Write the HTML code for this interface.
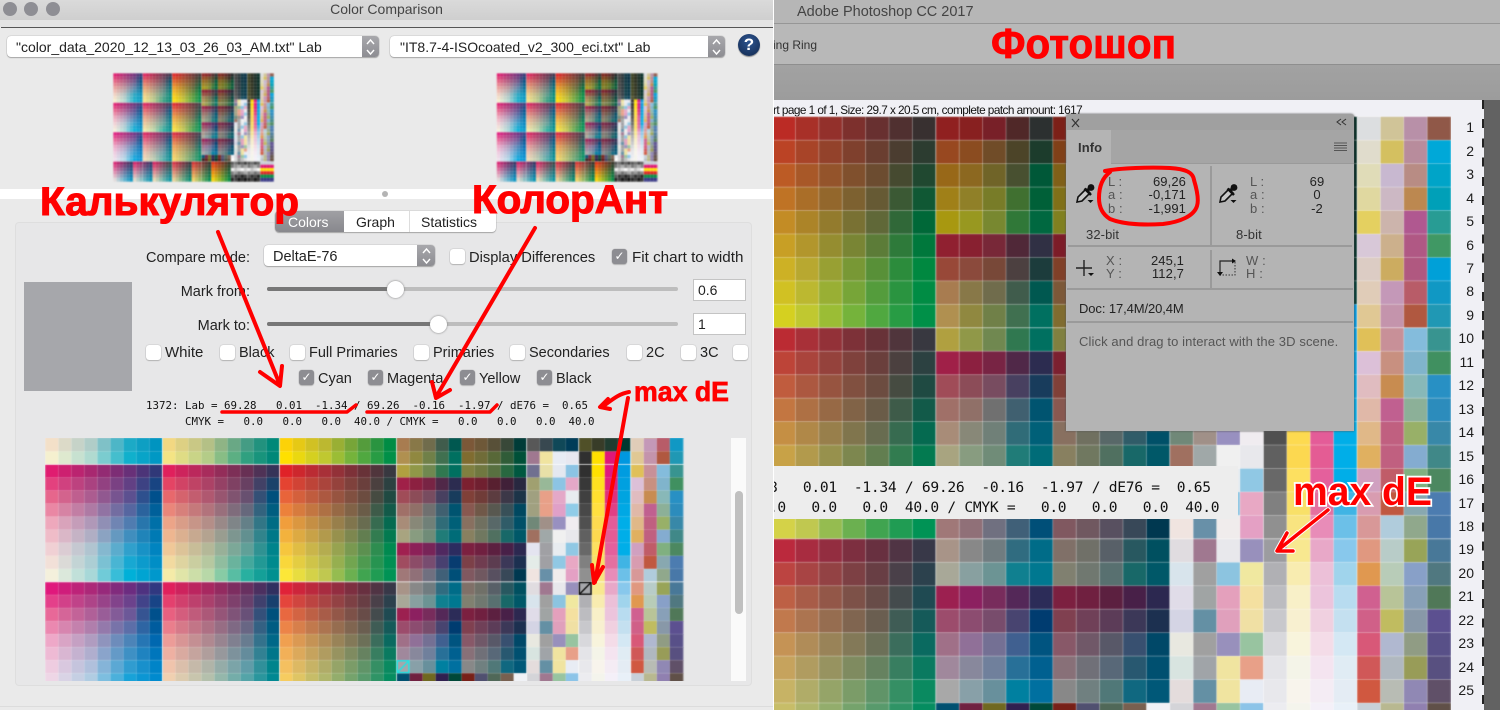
<!DOCTYPE html>
<html><head><meta charset="utf-8"><title>Color Comparison</title>
<style>
html,body{margin:0;padding:0;background:#f0f0f5}
#p{position:relative;width:1500px;height:710px;overflow:hidden;font-family:"Liberation Sans",sans-serif;color:#222}
.a,.t,canvas{position:absolute}
.t{white-space:nowrap;line-height:16px;font-size:14.5px}
.cb{position:absolute;width:15px;height:15px;background:#fff;border-radius:3px;box-shadow:0 0 1px #888,0 1px 1px #bbb}
.on{background:#8d8d92;color:#fff;font-size:12px;line-height:15px;text-align:center}
.pop{position:absolute;background:#fff;border-radius:4px;box-shadow:0 0 1px #888,0 1px 1px #aaa}
.st{position:absolute;right:0;top:0;bottom:0;background:linear-gradient(#a8a8ac,#8d8d92);border-radius:0 4px 4px 0}
.inp{position:absolute;background:#fff;border:1px solid #c4c4c4;box-sizing:border-box;font-size:14px;line-height:21px;padding-left:4px}
.trk{position:absolute;height:4px;border-radius:2px}
.kn{position:absolute;width:17px;height:17px;border-radius:50%;background:#fff;box-shadow:0 0 2px #777}
.m{font-family:"DejaVu Sans Mono","Liberation Mono",monospace;white-space:pre;position:absolute;color:#111}
.i{position:absolute;white-space:nowrap;font-size:13px;line-height:14px;letter-spacing:.1px;color:#222}
.g{color:#555}
.r{text-align:right}
.ln{position:absolute;background:#9a9a9a}
</style></head><body><div id="p">

<!-- Photoshop side -->
<div class="a" style="left:773px;top:0;width:727px;height:24px;background:#b6b6b6"></div>
<div class="a" style="left:773px;top:23px;width:727px;height:1px;background:#969696"></div>
<div class="a" style="left:773px;top:24px;width:727px;height:40px;background:#b8b8b8"></div>
<div class="a" style="left:773px;top:64px;width:727px;height:1px;background:#8e8e8e"></div>
<div class="a" style="left:773px;top:65px;width:727px;height:35px;background:linear-gradient(#a2a2a2,#9c9c9c)"></div>
<div class="t" style="left:797px;top:4px;color:#444;font-size:14.5px">Adobe Photoshop CC 2017</div>
<div class="t" style="left:773px;top:37px;font-size:12px;color:#333">ing Ring</div>
<div class="a" style="left:773px;top:100px;width:727px;height:610px;background:#f0f0f5"></div>
<div class="t" style="left:773px;top:102px;font-size:11.8px;letter-spacing:-.55px;color:#111">rt page 1 of 1, Size: 29.7 x 20.5 cm, complete patch amount: 1617</div>
<canvas id="cR" width="678" height="594" style="left:773px;top:116px;filter:blur(.3px)"></canvas>
<div class="a" style="left:1482px;top:100px;width:2px;height:610px;background:repeating-linear-gradient(#222 0 9px,transparent 9px 19.2px)"></div>
<div class="a" style="left:1484px;top:100px;width:16px;height:610px;background:#626262"></div>
<div class="a r" style="left:1440px;top:116.3px;width:34px;font-size:14px;line-height:23.46px;color:#1c1c1c;white-space:pre">1
2
3
4
5
6
7
8
9
10
11
12
13
14
15
16
17
18
19
20
21
22
23
24
25</div>

<!-- overlay numbers -->
<div class="a" style="left:773px;top:466px;width:465px;height:53px;background:#ededed;overflow:hidden"><div class="m" style="left:-140px;top:12px;font-size:14.6px;line-height:20px;letter-spacing:-.29px">1372: Lab = 69.28   0.01  -1.34 / 69.26  -0.16  -1.97 / dE76 =  0.65
      CMYK =   0.0   0.0   0.0  40.0 / CMYK =   0.0   0.0   0.0  40.0</div></div>

<!-- Info panel -->
<div class="a" style="left:1066px;top:114px;width:288px;height:317px;background:#b4b4b4;border-radius:3px 3px 0 0;box-shadow:0 0 2px #555"></div>
<div class="a" style="left:1066px;top:114px;width:288px;height:16px;background:#a0a0a0;border-radius:3px 3px 0 0"></div>
<div class="a" style="left:1066px;top:130px;width:288px;height:33px;background:#a5a5a5"></div>
<div class="a" style="left:1067px;top:130px;width:44px;height:34px;background:#b4b4b4"></div>
<div class="ln" style="left:1111px;top:163px;width:243px;height:1px"></div>
<div class="ln" style="left:1210px;top:166px;width:2px;height:80px"></div>
<div class="ln" style="left:1068px;top:245px;width:284px;height:2px"></div>
<div class="ln" style="left:1210px;top:250px;width:2px;height:38px"></div>
<div class="ln" style="left:1067px;top:288px;width:286px;height:2px"></div>
<div class="ln" style="left:1067px;top:321px;width:286px;height:2px"></div>
<div class="i" style="left:1078px;top:141px;font-weight:bold;color:#333">Info</div>
<div class="i g" style="left:1108px;top:175px;line-height:13.4px">L :<br>a :<br>b :</div>
<div class="i r" style="left:1130px;top:175px;width:56px;line-height:13.4px">69,26<br>-0,171<br>-1,991</div>
<div class="i g" style="left:1250px;top:175px;line-height:13.4px">L :<br>a :<br>b :</div>
<div class="i" style="left:1297px;top:175px;width:40px;line-height:13.4px;text-align:center">69<br>0<br>-2</div>
<div class="i" style="left:1086px;top:228px;color:#333">32-bit</div>
<div class="i" style="left:1236px;top:228px;color:#333">8-bit</div>
<div class="i g" style="left:1106px;top:254px;line-height:13.4px">X :<br>Y :</div>
<div class="i r" style="left:1130px;top:254px;width:54px;line-height:13.4px">245,1<br>112,7</div>
<div class="i g" style="left:1246px;top:254px;line-height:13.4px">W :<br>H :</div>
<div class="i" style="left:1079px;top:302px;letter-spacing:-.1px">Doc: 17,4M/20,4M</div>
<div class="i" style="left:1079px;top:335px;color:#555;letter-spacing:.11px">Click and drag to interact with the 3D scene.</div>

<!-- Left window -->
<div class="a" style="left:0;top:0;width:773px;height:710px;background:#eaeaea;border-right:1px solid #fff"></div>
<div class="a" style="left:0;top:0;width:773px;height:20px;background:linear-gradient(#dadada,#cfcfcf)"></div>
<div class="a" style="left:0;top:20px;width:773px;height:7px;background:#e4e4e4"></div>
<div class="a" style="left:1px;top:27px;width:772px;height:1px;background:#555"></div>
<div class="a" style="left:3px;top:2px;width:14px;height:14px;border-radius:50%;background:#8e8e94"></div>
<div class="a" style="left:24px;top:2px;width:14px;height:14px;border-radius:50%;background:#8e8e94"></div>
<div class="a" style="left:46px;top:2px;width:14px;height:14px;border-radius:50%;background:#8e8e94"></div>
<div class="t" style="left:0;top:1px;width:773px;text-align:center;font-size:14px;color:#444">Color Comparison</div>

<div class="pop" style="left:7px;top:36px;width:372px;height:21px"><div class="st" style="width:17px"></div></div>
<div class="t" style="left:16px;top:39px;font-size:14px">"color_data_2020_12_13_03_26_03_AM.txt" Lab</div>
<div class="pop" style="left:390px;top:36px;width:335px;height:21px"><div class="st" style="width:17px"></div></div>
<div class="t" style="left:400px;top:39px;font-size:14px">"IT8.7-4-ISOcoated_v2_300_eci.txt" Lab</div>
<div class="a" style="left:738px;top:34px;width:22px;height:22px;border-radius:50%;background:radial-gradient(circle at 50% 35%,#2d5590,#12284e);box-shadow:0 1px 1px #888;color:#fff;font-weight:bold;font-size:17px;line-height:22px;text-align:center">?</div>

<canvas id="c1" width="162" height="109" style="left:113px;top:73px;filter:blur(.5px)"></canvas>
<canvas id="c2" width="162" height="109" style="left:496px;top:73px;filter:blur(.5px)"></canvas>

<div class="a" style="left:0;top:189px;width:773px;height:10px;background:#fff"></div>
<div class="a" style="left:382px;top:190.5px;width:6px;height:6px;border-radius:50%;background:#b4b4b4"></div>

<div class="a" style="left:15px;top:222px;width:737px;height:464px;background:#e7e7e8;border:1px solid #dedede;border-radius:4px;box-sizing:border-box"></div>
<div class="a" style="left:275px;top:211px;width:221px;height:21px;background:#fff;border-radius:4px;box-shadow:0 0 1px #888,0 1px 1px #aaa"></div>
<div class="a" style="left:275px;top:211px;width:69px;height:21px;background:linear-gradient(#a0a0a4,#88888d);border-radius:4px 0 0 4px"></div>
<div class="a" style="left:409px;top:211px;width:1px;height:21px;background:#ddd"></div>
<div class="t" style="left:288px;top:214px;color:#fff;font-size:14px">Colors</div>
<div class="t" style="left:356px;top:214px;font-size:14px">Graph</div>
<div class="t" style="left:421px;top:214px;font-size:14px">Statistics</div>

<div class="t r" style="left:100px;top:250px;width:150px">Compare mode:</div>
<div class="pop" style="left:264px;top:245px;width:171px;height:21px"><div class="st" style="width:18px"></div></div>
<div class="t" style="left:273px;top:249px">DeltaE-76</div>
<div class="cb" style="left:450px;top:249px"></div><div class="t" style="left:469px;top:250px;font-size:14.7px">Display Differences</div>
<div class="cb on" style="left:612px;top:249px">✓</div><div class="t" style="left:632px;top:250px;font-size:15.2px">Fit chart to width</div>

<div class="a" style="left:24px;top:282px;width:108px;height:109px;background:#a6a7ab"></div>

<div class="t r" style="left:100px;top:284px;width:150px">Mark from:</div>
<div class="trk" style="left:267px;top:287px;width:411px;background:#bdbdbd"></div>
<div class="trk" style="left:267px;top:287px;width:128px;background:#777"></div>
<div class="kn" style="left:387px;top:281px"></div>
<div class="inp" style="left:693px;top:279px;width:53px;height:22px">0.6</div>

<div class="t r" style="left:100px;top:318px;width:150px">Mark to:</div>
<div class="trk" style="left:267px;top:322px;width:411px;background:#bdbdbd"></div>
<div class="trk" style="left:267px;top:322px;width:171px;background:#777"></div>
<div class="kn" style="left:430px;top:316px"></div>
<div class="inp" style="left:693px;top:313px;width:53px;height:22px">1</div>

<div class="cb" style="left:146px;top:345px"></div><div class="t" style="left:165px;top:345px;font-size:15px">White</div>
<div class="cb" style="left:220px;top:345px"></div><div class="t" style="left:239px;top:345px">Black</div>
<div class="cb" style="left:290px;top:345px"></div><div class="t" style="left:309px;top:345px">Full Primaries</div>
<div class="cb" style="left:414px;top:345px"></div><div class="t" style="left:433px;top:345px">Primaries</div>
<div class="cb" style="left:510px;top:345px"></div><div class="t" style="left:529px;top:345px">Secondaries</div>
<div class="cb" style="left:627px;top:345px"></div><div class="t" style="left:646px;top:345px">2C</div>
<div class="cb" style="left:681px;top:345px"></div><div class="t" style="left:700px;top:345px">3C</div>
<div class="cb" style="left:733px;top:345px"></div>

<div class="cb on" style="left:299px;top:370px">✓</div><div class="t" style="left:318px;top:371px">Cyan</div>
<div class="cb on" style="left:368px;top:370px">✓</div><div class="t" style="left:387px;top:371px">Magenta</div>
<div class="cb on" style="left:460px;top:370px">✓</div><div class="t" style="left:479px;top:371px">Yellow</div>
<div class="cb on" style="left:537px;top:370px">✓</div><div class="t" style="left:556px;top:371px">Black</div>

<div class="m" style="left:146px;top:398px;font-size:10.8px;line-height:16px">1372: Lab = 69.28   0.01  -1.34 / 69.26  -0.16  -1.97 / dE76 =  0.65
      CMYK =   0.0   0.0   0.0  40.0 / CMYK =   0.0   0.0   0.0  40.0</div>

<canvas id="cL" width="640" height="243" style="left:45px;top:438px;filter:blur(.3px)"></canvas>
<div class="a" style="left:731px;top:438px;width:15px;height:243px;background:#fafafa"></div>
<div class="a" style="left:735px;top:491px;width:8px;height:123px;border-radius:4px;background:#c0c0c0"></div>
<div class="a" style="left:0;top:706px;width:773px;height:1px;background:#dcdcdc"></div>

<!-- vector overlay -->
<svg class="a" style="left:0;top:0" width="1500" height="710" viewBox="0 0 1500 710">
 <!-- stepper chevrons -->
 <g fill="none" stroke="#fff" stroke-width="1.4">
  <path d="M367,44l3.5,-4l3.5,4M367,50l3.5,4l3.5,-4"/>
  <path d="M713,44l3.5,-4l3.5,4M713,50l3.5,4l3.5,-4"/>
  <path d="M423,253l3.5,-4l3.5,4M423,259l3.5,4l3.5,-4"/>
 </g>
 <!-- Info panel icons -->
 <g stroke="#333" fill="none" stroke-width="1.2">
  <path d="M1072,119l7,8M1079,119l-7,8"/>
  <path d="M1341,119l-4,3l4,3M1346,119l-4,3l4,3" stroke-width="1"/>
  <path d="M1334,143h13M1334,145.5h13M1334,148h13M1334,150.5h13" stroke="#555" stroke-width="1"/>
 </g>
 <g>
  <path d="M1077,202l1,-5l8,-8l4,4l-8,8z" fill="#c8c8c8" stroke="#111" stroke-width="1.600"/>
  <path d="M1084.500,188.500l6.500,6.500" stroke="#111" stroke-width="2.600"/>
  <circle cx="1091" cy="187.500" r="3.400" fill="#111"/>
  <path d="M1087,191l4,-4" stroke="#111" stroke-width="3.200"/>
  <path d="M1087.500,200h6l-3,3z" fill="#111"/>
 </g>
 <g transform="translate(143,0)">
  <path d="M1077,202l1,-5l8,-8l4,4l-8,8z" fill="#c8c8c8" stroke="#111" stroke-width="1.600"/>
  <path d="M1084.500,188.500l6.500,6.500" stroke="#111" stroke-width="2.600"/>
  <circle cx="1091" cy="187.500" r="3.400" fill="#111"/>
  <path d="M1087,191l4,-4" stroke="#111" stroke-width="3.200"/>
  <path d="M1087.500,200h6l-3,3z" fill="#111"/>
 </g>
 <path d="M1084,260v16M1076,268h16" stroke="#222" stroke-width="1.400" fill="none"/>
 <path d="M1088,273h6l-3,3z" fill="#111"/>
 <path d="M1220,275v-14h15" stroke="#222" stroke-width="1.200" fill="none"/>
 <path d="M1235,262v13h-15" stroke="#333" stroke-width="1" stroke-dasharray="1.500 1.500" fill="none"/>
 <path d="M1232,258.500l4,2.500l-4,2.500zM1217,272l3,4l3,-4z" fill="#111"/>

 <!-- red annotations -->
 <g font-family="'Liberation Sans',sans-serif" font-weight="bold" fill="#f00">
  <text x="40" y="215" font-size="40" textLength="259" lengthAdjust="spacingAndGlyphs" stroke="#f00" stroke-width="1.100">Калькулятор</text>
  <text x="472" y="213" font-size="40" textLength="196" lengthAdjust="spacingAndGlyphs" stroke="#f00" stroke-width="1.100">КолорАнт</text>
  <text x="991" y="58" font-size="42" textLength="185" lengthAdjust="spacingAndGlyphs" stroke="#f00" stroke-width=".8">Фотошоп</text>
  <text x="634" y="401" font-size="28" textLength="95" lengthAdjust="spacingAndGlyphs" stroke="#f00" stroke-width=".7">max dE</text>
  <text x="1293" y="505" font-size="40" textLength="139" lengthAdjust="spacingAndGlyphs" stroke="#fff" stroke-width="3.500" paint-order="stroke">max dE</text>
 </g>
 <g fill="none" stroke="#f00" stroke-width="4" stroke-linecap="round" stroke-linejoin="round">
  <path d="M218,232L280,385M260,372L280,386L282,366"/>
  <path d="M535,228L436,397M432,382L436,398L450,390"/>
  <path d="M222,412H347L356,405M367,412H490L497,405" stroke-width="3.500"/>
  <path d="M629,392C618,394 612,400 602,407M608,399L600,407L610,409"/>
  <path d="M628,398L595,582M592,565L594,583L603,567" stroke-width="4"/>
 </g>
 <path d="M1328,510L1278,550M1287,533L1277,551L1293,551" fill="none" stroke="#fff" stroke-width="5.500" stroke-linecap="round" stroke-linejoin="round"/>
 <path d="M1328,510L1278,550M1287,533L1277,551L1293,551" fill="none" stroke="#f00" stroke-width="3.500" stroke-linecap="round" stroke-linejoin="round"/>
 <path d="M1105,171C1120,168 1150,167 1170,168C1185,169 1193,172 1194,180C1197,190 1199,200 1197,206C1194,216 1180,222 1163,224C1145,225 1125,225 1110,219C1102,214 1099,206 1099,198C1099,188 1102,178 1110,172" fill="none" stroke="#f00" stroke-width="4" stroke-linecap="round"/>
</svg>
</div>

<script>
var S=function(t){return t.trim().split(/\s+/).map(function(l){return l.split(',')})};
var CT=[[
 S("E0186C,A82870,6C2C78,303470 E46280,B05C80,6C5488,004C80 EAA09C,B8949C,5C84A8,006C98 F0D0C0,B0C0C0,28A4C0,0090BC F5F0CF,B0DAD0,10B0CC,0098C4"),
 S("E0205C,A8284C,68304C,383048 E46860,B05860,685060,004C68 EAA070,B08878,647878,006C78 F0CC80,B4B484,589888,008878 F4E484,B4CC88,30A080,008878"),
 S("E02020,A83028,683030,383030 E46020,A85828,6C4C30,204830 F09C20,AC8428,606838,006838 F8C410,B8A830,589038,008840 FFE000,C0C830,50A840,009048")
],[
 S("E01C70,A82870,683078,303878 E6668C,AC5C90,5C5090,00508C EEA8BC,B098B8,507CB0,0070A8 F0D0D4,B0C4D0,30A0CC,0084C0 F4F0DC,A8D8D8,00B0D8,0098CC"),
 S("E0205C,A82C5C,683054,363358 E8686C,B05870,685070,00507C ECA488,B48E88,648088,006C84 F0C898,B4B898,60A098,00848C F4EBA8,B8D8A8,28B0A0,009090"),
 S("E02228,A83038,683238,383840 E8643A,AC5840,6C4C40,1F4A42 F09E3C,B08848,686C50,056A50 F6C63E,B4AC50,5C9050,008A50 FCE738,C0C850,40A450,009355")
],[
 S("E0187C,AC2878,6C2C80,303880 E86898,B06098,6C5898,00508C EEA8C8,B09CC0,4C84B8,0068B0 EECCE0,B0C0DC,309CD0,0084C8 EEE0EC,B0D8E8,00A8E0,0090D4"),
 S("E0205C,A82860,683060,303060 E86080,AC5878,685078,00507C EC9C98,B08890,687C90,006888 F0C4AC,B0B4A8,609CA8,00848C F0DCB4,B8CCB0,48ACA8,008C98"),
 S("E02238,A82C40,683040,383848 E86840,A85C48,684C48,1F4A52 F0A050,B08C58,6C7058,0A6A60 F4C060,B0AC68,609468,0A8A60 F8D860,B0C070,50A070,009060")
]];
var T1=S(`
902020,882020,782028,502828,2C3030,7C2018,702018,5C2020,3C2020,1C2020
984820,8B4C20,704C28,4C4428,1C3C2C,804018,704018,583C20,382C20,103028
986818,8C6820,706428,485030,005838,806018,706018,585820,344828,004828
A08018,908028,787C28,407030,006038,807018,707018,587020,306028,005030
A89810,989820,788830,307838,006840,808020,707820,587028,286830,005830
902030,882030,782838,502838,303044,7C1C28,701C28,5C1C30,401C30,1C2030
984838,8B4A3C,784838,4C4040,1C3C3C,804028,704028,583C30,383438,103030
A87C50,887848,706C4C,405C4C,005850,7C5838,6E5838,585038,384838,003C38
B09050,908840,708048,407050,007060,806C30,706C38,586838,305C38,005038
B0A040,909848,708850,307850,007060,808040,707840,587040,286840,005840
A02048,8C2040,782444,502848,2C2C50,7C2030,702030,582030,402038,282840
A04C58,8C4C58,784C60,484060,183C5C,804038,703C38,5C3C40,3C3848,1C3448
A07068,907068,707070,406070,005470,885850,705848,585850,385058,004860
A88C78,888878,708078,306C78,006078,887060,707060,586868,305C68,005068
A8A480,889C80,708C78,207C78,006C78,888060,707860,507060,186868,005868
A02050,8C2058,782458,502860,2C2C60,7C2040,702040,5C2040,482048,2C2850
A04C60,8C4C68,784C70,484070,083C70,7C4048,703C50,5C3C50,3C3858,1C3050
A07878,907078,707080,406078,004F78,805860,705860,585060,384858,003850
A89488,888888,707C80,306C80,006C88,807068,707068,586068,285860,005060
A8A898,88A0A0,6C9494,108090,007890,808070,707870,587070,186868,005868
9C2050,8C2060,782C5C,542858,2C2C58,7C2040,702040,5C2040,482048,2C2850
9C4C6C,8C4C70,784C6C,484470,003C70,804050,704058,5C3C58,3C3858,1C3050
A07088,907098,747094,406090,005480,885868,705868,585868,385070,004868
A0889C,88889C,70809C,287098,006090,887078,707078,586878,285870,005070
A8A8A8,88A0A8,68909C,0080A0,0070A0,888888,708080,507878,106880,005878
005070,702040,706820,302050,004838,782018,505070,506858,786050,F0F2F6
302020,601818,606010,201840,003020,601010,404060,405040,604838,FFFFFF`);
var T2=S(`
3C3C3C,283438,0C3440,002C40,383C1C,282C1C,182C24,002820
3C3C3C,283438,0C3440,002C40,383C1C,282C1C,182C24,002820
404040,283438,0C3440,002C40,383C1C,282C1C,182C24,002820
404040,2C383C,0C3840,003040,3C401C,2C301C,182C24,002820
444444,2C383C,0C3840,003040,3C401C,2C301C,182C24,002820
484848,303C44,0C3C48,003448,404420,303420,1C3028,002C24
4C4C4C,303C44,0C3C48,003448,404420,303420,1C3028,002C24
585858,384850,104858,003C58,505028,383C28,203C30,003830
A07890,F0E4A0,E8ECF4,E8E8F0,303030,FFE000,E01878,0098E0
707090,E8E0A8,E4E8F0,8CC4E4,303030,FFE000,E01880,009CE0
A0A070,98B898,8CC4E4,E4A8C8,383838,FFE020,E0207C,00A0E0
A0A080,E8A088,E4A8C8,E8ECF0,404040,FFE030,E0307C,00A4E0
A0A080,E8A088,E0A0C8,90CCE8,484848,FFE040,E04084,00A8E4
708878,A09088,9890C0,F0ECF0,505050,FDDA50,E45C98,00AEE8
A07060,A0A8A8,F0F0F0,E8E8EC,606060,FCD850,E45C94,00AEE8
E4E4F0,A0A0A4,E8ECF0,90C8E4,686868,FDE060,E4609C,00AEE8
E4ECE8,A0A0A4,90C8E4,E8A8C4,808080,F8E068,E470A0,40B4E4
F0E4E0,6890A8,F0ECEC,E4A0C4,909090,F8E480,E88CB8,6CC0E8
E0DCE0,A07890,E8E8EC,9890BC,9C9CA0,F8E890,E8A8C8,88C8EC
D8E4EC,A0A0A0,8CC4E0,F0E8A0,B0B0B4,F8ECB0,ECC0D8,A0D4EC
E0DCE8,A0A4A4,E4A0BC,F4E0A0,BCBCC0,F8F0C8,ECC4DC,B8DCF0
D4D4E4,6490A4,E0A0BC,F0E0A4,C8C8CC,F8F0D0,F0D0E0,C4E0F0
E8E8E0,A0A0A0,9890BC,98C4A0,D8D8DC,F8F4DC,F4DCE8,D4E8F4
D8E4E0,A0A4A8,F0E4A0,E8A088,E4E4E8,F4F4E8,F4E4F0,E0ECF4
E4DCDC,6490A4,F0E4A0,E8ECF4,E8E8EC,F8F4EC,F4ECF4,E4ECF4
D4D4D8,A07890,98C4A0,8CC4E8,ECECF0,F4F4EC,F4F0F8,E8F0F8
D8D8D8,909090,C0C0C0,E0E0E0,F0F0F0,F4F4EC,F4F0F8,ECF4F8`);
var T3=S(`
DCDEE0,D0C498,B890A8,905848
E0DCCC,D4C060,B88C9C,00A8D8
E0DCB8,C8B8D0,B88C84,00A4C8
E0D8A0,CCB8C4,BC8850,00A0B8
E4D060,CCB4AC,B05890,289C94
D8C8D8,CCB08C,B05884,409864
DCCCC4,CCAC60,B05880,00A0D8
E0CCB8,C498B8,B85C68,1098C4
E0C894,C494AC,B05840,2098B4
E0C058,C89098,84BCDC,389490
DCC0D8,C89080,80B4CC,409060
E0BCC0,C88C50,88B8B8,2890C4
E0B8A8,C06090,8CB098,2C8CBC
E0B888,C06080,98B068,3888A8
E0B060,C06080,84ACD0,408888
D0A0C0,C05C68,80B080,4C8860
D89CB0,C05840,88A8B0,4C7CB0
D89898,B0CCDC,90A88C,4878A8
E09880,B8CCC8,98A458,487898
E09850,B8CCB8,88A0C8,507880
D06090,B8C498,88A0B8,507858
D06088,C0BC60,8898A8,5C5090
D85878,B0B8D0,909C84,585088
D05858,B0B8C0,989C58,585080
D05840,B8BCB4,9088B4,605068
C8D0D8,B8B890,9080B0,605048
B8C0C8,B8B880,8C80A8,604838`);
function h(s){return [parseInt(s.substr(0,2),16),parseInt(s.substr(2,2),16),parseInt(s.substr(4,2),16)]}
function mix(a,b,t){return [a[0]+(b[0]-a[0])*t,a[1]+(b[1]-a[1])*t,a[2]+(b[2]-a[2])*t]}
var CP=[0,3,6,8];
function rowAt(arr,j){var k=0;while(k<2&&j>CP[k+1])k++;return mix(h(arr[k]),h(arr[k+1]),(j-CP[k])/(CP[k+1]-CP[k]))}
var BT=["D82070","D82068","D82060","D82840","D83030","E03010"],BB=["E0D8D8","E0D8C8","E8D8B0","E8D090","F0D060","F8D000"],BR=["303060","303060","304040","303038","303028","303020"],BS=["0090C0","0090B0","0090A0","008870","008850","008840"];
var GR=[0x50,0x90,0xe0,0x88,0x38,0x1c];
var EN=["C8D0D8","E01070","FFE000","E02020","009040","303080"];
function col(c,r){
 if(r>27){var i=r-28;
  if(c<36){var k=Math.floor(c/6),j=c-k*6;var L=mix(h(BT[k]),h(BB[k]),i/5),R=mix(h(BR[k]),h(BS[k]),i/5);return mix(L,R,j/5)}
  if(c<45){var v=GR[i]+((c*7+i*13)%5-2)*14;v=Math.max(8,Math.min(250,v));return [v,v,v]}
  return h(EN[i]);
 }
 if(c<27){var k=Math.floor(c/9),seg=Math.floor((r-1)/9),i=r-1-seg*9,j=c-k*9,ct=CT[seg][k];
  var a=Math.floor(i/2),b=Math.min(4,a+1);return mix(rowAt(ct[a],j),rowAt(ct[b],j),(i-a*2)/2)}
 if(c<37)return h(T1[r-1][c-27]);
 if(c<45)return h(T2[r-1][c-37]);
 return h(T3[r-1][c-45]);
}
function draw(id,X,Y,x0,y0,cw,ch,la,lb){
 var e=document.getElementById(id),g=e.getContext('2d'),r,c;
 for(r=1;r<=33;r++)for(c=0;c<49;c++){
  var C=col(c,r),px=x0+c*cw-X,py=y0+(r-1)*ch-Y;
  if(py>e.height||py+ch<0||px>e.width||px+cw<0)continue;
  g.fillStyle='rgb('+Math.round(C[0])+','+Math.round(C[1])+','+Math.round(C[2])+')';
  g.fillRect(px,py,cw+.6,ch+.6);
 }
 g.fillStyle='rgba(255,255,255,'+la+')';
 for(c=0;c<=49;c++){g.fillRect(x0+c*cw-X-.5,0,1,e.height)}
 for(r=0;r<=33;r++){g.fillRect(0,y0+r*ch-Y-.5,e.width,1)}
 g.fillStyle='rgba(255,255,255,'+lb+')';
 [9,18,27,37,41,45].forEach(function(k){g.fillRect(x0+k*cw-X-.5,0,1,e.height)});
 [9,18,27].forEach(function(k){g.fillRect(0,y0+k*ch-Y-.5,e.width,1)});
 return g;
}
var rx0=304,ry0=116.7,rc=23.4,rr=23.45;
draw('cR',773,116,rx0,ry0,rc,rr,.3,.3);
draw('c1',113,73,113.3,73.3,3.265,3.265,.15,.25);
draw('c2',496,73,496.8,73.3,3.265,3.265,.15,.25);
var lh=13.05,lx0=45.3,ly0=438.3-7*lh,lc=13.01;
var g=draw('cL',45,438,lx0,ly0,lc,lh,.15,.65);
// bottom and right clip of left chart
g.clearRect(0,242.7,640,10);g.clearRect(638.5,0,10,243);
// patch markers
function mark(col_,idx,stroke){
 var x=lx0+col_*lc-45,y=438.3+idx*lh-438;
 g.fillStyle='#a6a7ab';g.fillRect(x,y,lc,lh);
 g.strokeStyle=stroke;g.lineWidth=1.4;g.strokeRect(x+.7,y+.7,lc-1.4,lh-1.4);
 g.beginPath();g.moveTo(x+1,y+lh-1);g.lineTo(x+lc-1,y+1);g.stroke();
}
mark(41,11,'#111');mark(27,17,'#1ee6e6');
</script>
</body></html>
